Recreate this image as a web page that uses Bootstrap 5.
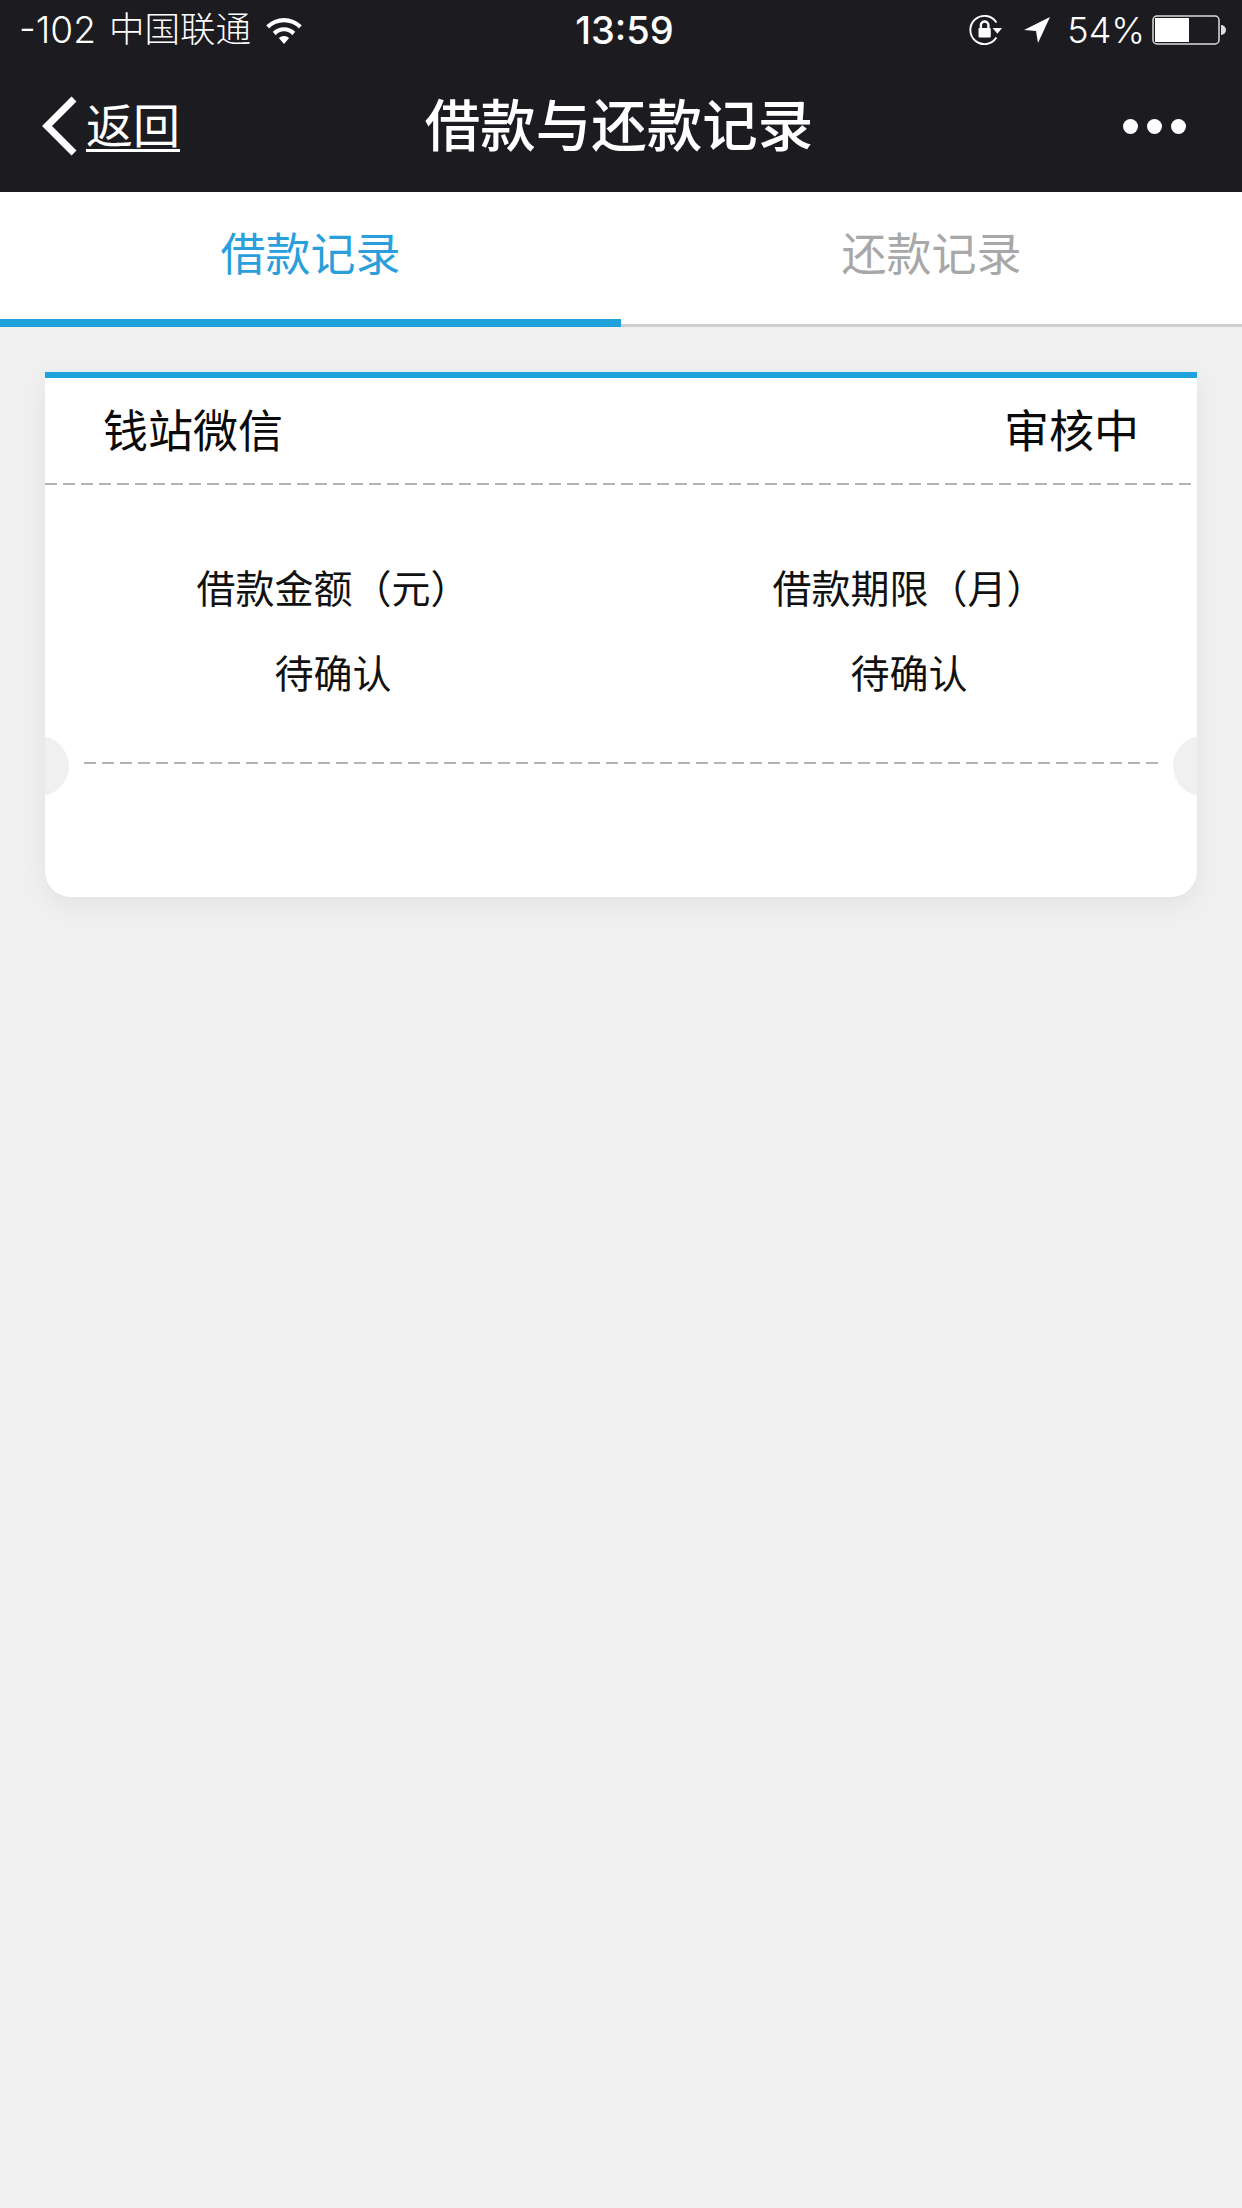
<!DOCTYPE html>
<html lang="zh-CN">
<head>
  <meta charset="UTF-8" />
  <meta name="viewport" content="width=device-width, initial-scale=1" />
  <title>借款与还款记录</title>
  <link href="https://cdn.jsdelivr.net/npm/bootstrap@5.3.0/dist/css/bootstrap.min.css" rel="stylesheet" />
  <style>
    body {
      background: #f0f0f0;
      font-family: "Inter", "Noto Sans CJK SC", sans-serif;
      height: 2208px;
      overflow: hidden;
    }
    .top-dark { background: #1b1b20; color: #fff; height: 192px; }
    .status-row { height: 60px; padding: 0 16px 0 19px; font-size: 36px; line-height: 60px; font-weight: 300; }
    .status-col { flex: 1 1 0; }
    .signal-num { font-size: 37px; margin-right: 13px; }
    .carrier-name { font-size: 35.500px; }
    .wifi-icon { margin-left: 14px; }
    .status-time { font-weight: 500; font-size: 38px; margin-left: 4px; }
    .arrow-icon { margin-left: 17px; }
    .batt-pct { margin-left: 16px; }
    .batt-icon { margin-left: 7px; }
    .title-row { height: 132px; padding: 0 56px 0 41px; }
    .back-link { color: #fff; font-size: 47px; text-decoration: underline; text-underline-offset: 6px; text-decoration-thickness: 3px; margin-left: 9px; }
    .page-title { font-size: 55.500px; font-weight: 500; left: 619px; top: 50%; transform: translate(-50%, -50%); white-space: nowrap; }
    .more-dot { width: 15px; height: 15px; background: #fff; border-radius: 50%; }
    .more-dots { gap: 9px; }
    .tab-bar { background: #fff; height: 135px; border-bottom: 3px solid #cfcfcf; }
    .tab-item { font-size: 45px; line-height: 126px; color: #a8a8a8; margin-bottom: -3px; height: 135px; }
    .tab-item.on { color: #2a9fdc; border-bottom: 8px solid #1ea3dd; }
    .ticket {
      margin: 45px 45px 0;
      height: 525px;
      background: #fff;
      border-top: 6px solid #1ea3dd;
      border-radius: 0 0 26px 26px;
      box-shadow: 0 8px 26px rgba(0, 0, 0, .06);
      overflow: hidden;
    }
    .dash-line { height: 2px; background: repeating-linear-gradient(90deg, #b4b4b4 0 12px, transparent 12px 18px); }
    .ticket-head { height: 105px; padding: 2px 58px 0; font-size: 45px; color: #0a0a0a; }
    .ticket-cols { height: 277px; padding-top: 61px; }
    .ticket-col { font-size: 39px; line-height: 85px; color: #111; }
    .ticket-rule { margin: 0 39px; }
    .notch { width: 60px; height: 60px; border-radius: 50%; background: #f0f0f0; top: 358px; }
    .notch-l { left: -36px; }
    .notch-r { right: -36px; }
  </style>
</head>
<body>
  <div class="top-dark">
    <div class="status-row d-flex align-items-center">
      <div class="status-col d-flex align-items-center">
        <span class="signal-num">-102</span><span class="carrier-name">中国联通</span>
        <svg class="wifi-icon" width="38" height="28" viewBox="0 0 40 30"><path d="M1 10a27 27 0 0 1 38 0l-3 3.500a22 22 0 0 0-32 0z M8 17a17 17 0 0 1 24 0l-3 3.500a12 12 0 0 0-18 0z M14.500 23.500a8 8 0 0 1 11 0L20 30z" fill="#fff"/></svg>
      </div>
      <div class="status-time">13:59</div>
      <div class="status-col d-flex align-items-center justify-content-end">
        <svg width="38" height="32" viewBox="0 0 38 34" fill="none"><path d="M29 25a15 15 0 1 1 0-16" stroke="#fff" stroke-width="2"/><path d="M25 15h10l-5 6z" fill="#fff"/><rect x="10" y="15" width="13" height="10" rx="1" fill="#fff"/><path d="M12.500 15v-3a4 4 0 0 1 8 0v3" stroke="#fff" stroke-width="2.500"/></svg>
        <svg class="arrow-icon" width="28" height="28" viewBox="0 0 28 28"><path d="M27 1 1 14l12 1 2 12z" fill="#fff"/></svg>
        <span class="batt-pct">54%</span>
        <svg class="batt-icon" width="74" height="32" viewBox="0 0 74 32"><rect x="1" y="2" width="66" height="28" rx="4" fill="none" stroke="#ddd" stroke-width="1.500"/><rect x="3" y="4" width="34" height="24" fill="#fff"/><path d="M69 11a5 5 0 0 1 0 10z" fill="#ddd"/></svg>
      </div>
    </div>
    <div class="title-row d-flex align-items-center justify-content-between position-relative">
      <div class="d-flex align-items-center">
        <svg width="36" height="62" viewBox="0 0 36 62"><path d="M33 4 6 31l27 27" fill="none" stroke="#fff" stroke-width="7"/></svg>
        <a class="back-link" href="#">返回</a>
      </div>
      <div class="page-title position-absolute">借款与还款记录</div>
      <div class="more-dots d-flex">
        <span class="more-dot"></span><span class="more-dot"></span><span class="more-dot"></span>
      </div>
    </div>
  </div>

  <div class="tab-bar d-flex">
    <div class="tab-item on w-50 text-center">借款记录</div>
    <div class="tab-item w-50 text-center">还款记录</div>
  </div>

  <div class="ticket position-relative">
    <div class="ticket-head d-flex align-items-center justify-content-between">
      <span>钱站微信</span>
      <span>审核中</span>
    </div>
    <div class="dash-line"></div>
    <div class="ticket-cols row g-0">
      <div class="ticket-col col-6 text-center">
        <div>借款金额（元）</div>
        <div>待确认</div>
      </div>
      <div class="ticket-col col-6 text-center">
        <div>借款期限（月）</div>
        <div>待确认</div>
      </div>
    </div>
    <div class="ticket-rule dash-line"></div>
    <span class="notch notch-l position-absolute"></span>
    <span class="notch notch-r position-absolute"></span>
  </div>

  <script src="https://cdn.jsdelivr.net/npm/bootstrap@5.3.0/dist/js/bootstrap.bundle.min.js"></script>
</body>
</html>
